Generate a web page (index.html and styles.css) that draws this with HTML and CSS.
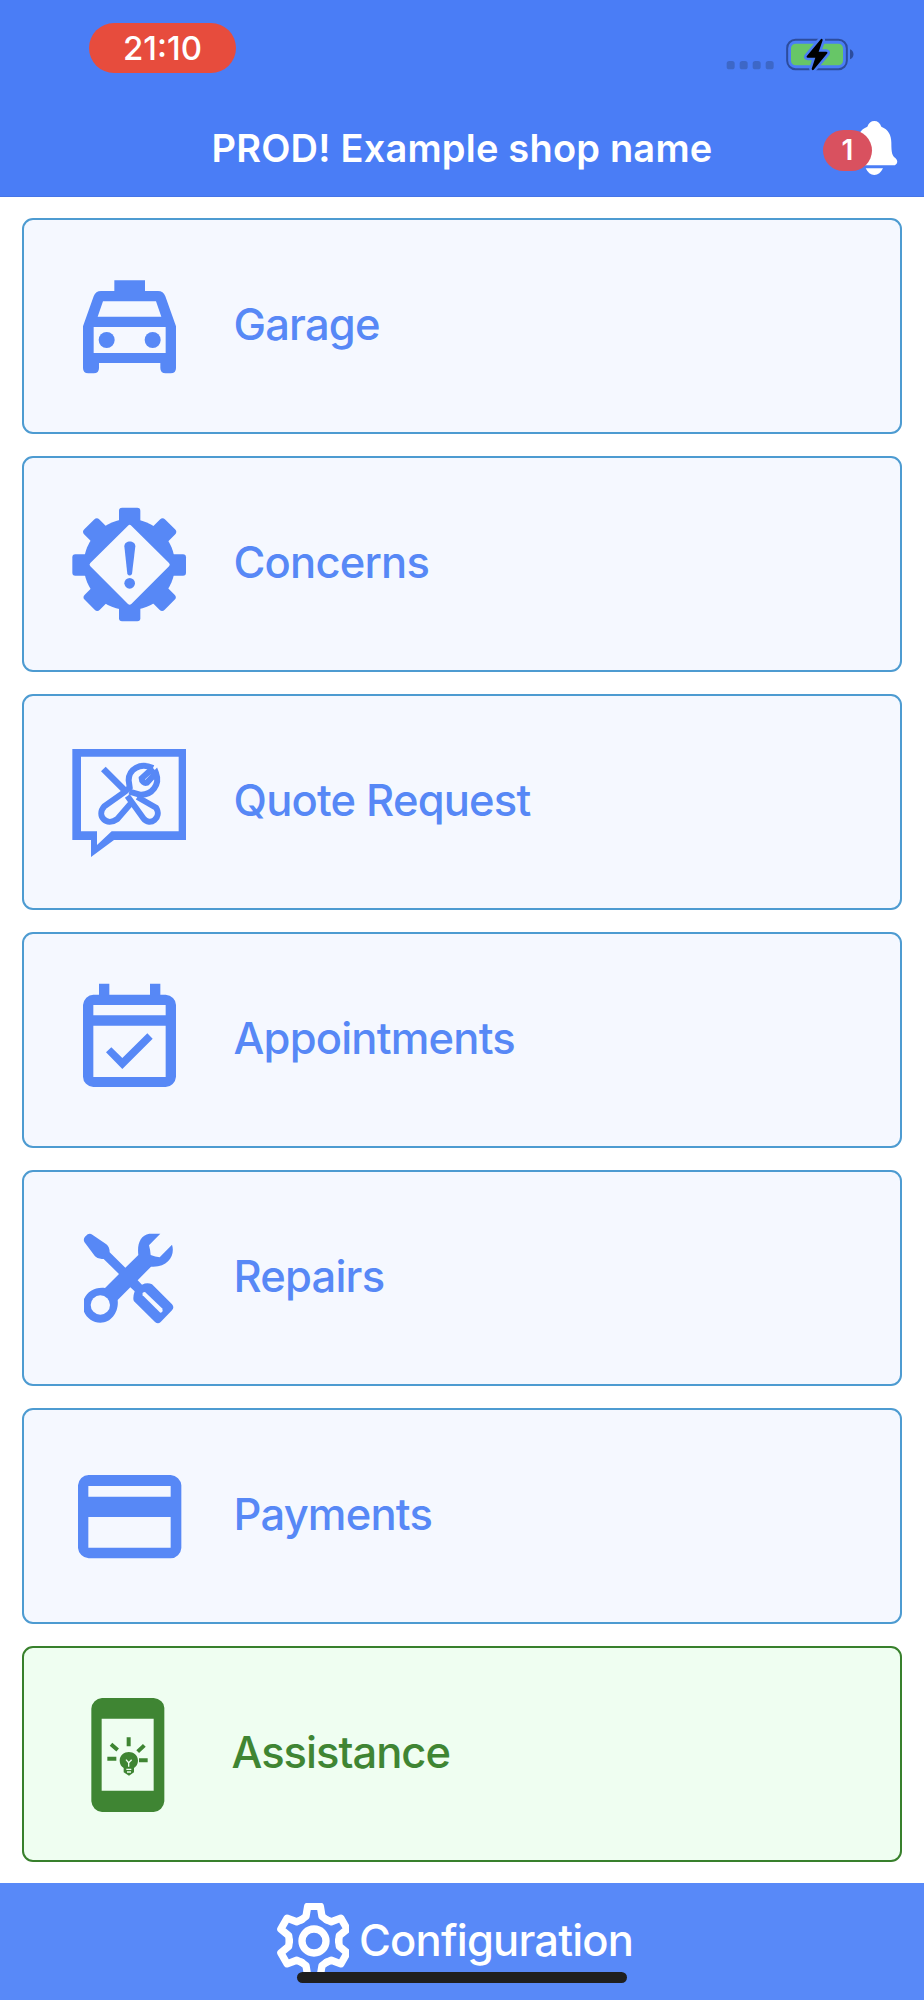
FILE: index.html
```html
<!DOCTYPE html>
<html lang="en">
<head>
  <meta charset="UTF-8">
  <meta name="viewport" content="width=device-width, initial-scale=1.0">
  <title>Example shop name</title>
  <link rel="stylesheet" href="styles.css">
</head>
<body>

<div class="app">
  <header class="header">
    <div class="status-bar">
      <div class="time">21:10</div>
      <svg class="status-icons" viewBox="120 96 420 132">
        <g fill="#3d67c7">
          <rect x="140" y="183" width="24" height="25" rx="8"/>
          <rect x="179" y="183" width="24" height="25" rx="8"/>
          <rect x="218" y="183" width="24" height="25" rx="8"/>
          <rect x="257" y="183" width="24" height="25" rx="8"/>
        </g>
        <rect x="321.500" y="119.500" width="179" height="88" rx="25" fill="none" stroke="#2c4c9d" stroke-width="6"/>
        <rect x="333" y="131" width="156" height="65" rx="14" fill="#67c667"/>
        <path d="M510 148C524 152 524 174 510 178Z" fill="#2c4c9d"/>
        <path d="M423 117L380 169Q378 173 383 173H406L395 206Q396 213 401 209L442 160Q444 156 439 155H416L428 121Q428 114 423 117Z" fill="#000" stroke="#4a7df6" stroke-width="15" stroke-linejoin="round" paint-order="stroke"/>
      </svg>
    </div>
    <div class="nav-bar">
      <h1 class="title">PROD! Example shop name</h1>
      <div class="notifications">
        <svg class="bell" viewBox="507 354 150 174" fill="#fff">
          <path d="M583 360C593 360 600 366 604 377C625 385 634 402 634 425C634 456 637 464 645 470C658 481 650 493 640 493H526C514 493 508 481 521 470C529 464 532 456 532 425C532 402 541 385 562 377C566 366 573 360 583 360Z"/>
          <path d="M557 502H609C603 515 594 522 583 522C572 522 563 515 557 502Z"/>
        </svg>
        <span class="badge">1</span>
      </div>
    </div>
  </header>

  <main class="menu">
    <a class="card">
      <svg class="icon" viewBox="210 229 360 360">
        <path fill-rule="evenodd" d="M343 272H435V304H474Q490 304 496 320L528 410V535Q528 551 512 551H497Q481 551 481 535V520H297V535Q297 551 281 551H265Q249 551 249 535V410L281 320Q287 304 303 304H343ZM309 335L293 381H484L468 335ZM281 412V490H497V412Z"/>
        <circle cx="320" cy="451" r="24"/>
        <circle cx="458" cy="451" r="24"/>
      </svg>
      <span class="label">Garage</span>
    </a>

    <a class="card">
      <svg class="icon" viewBox="60 43 360 360">
        <circle cx="238" cy="225" r="137"/>
        <g>
          <rect x="207" y="54" width="64" height="341" rx="9"/>
          <rect x="67" y="194" width="341" height="64" rx="9"/>
          <rect x="207" y="54" width="64" height="341" rx="11" transform="rotate(45 239 225.500)"/>
          <rect x="207" y="54" width="64" height="341" rx="11" transform="rotate(-45 239 225.500)"/>
        </g>
        <path class="hole" d="M234 108Q239 103 244 108L357 220Q362 225 357 230L244 343Q239 348 234 343L121 230Q116 225 121 220Z"/>
        <path d="M223 170C223 151 256 151 256 170L246 253Q239 262 232 253Z"/>
        <circle cx="239" cy="281" r="16"/>
      </svg>
      <span class="label">Concerns</span>
    </a>

    <a class="card">
      <svg class="icon" viewBox="60 36 360 360">
        <path fill-rule="evenodd" d="M67 57H408V330H192L123 381V330H67ZM93 80V304H141V345L185 304H386V80Z"/>
        <g class="outline" stroke-width="18">
          <path d="M160 117L226 183" stroke-width="20"/>
          <path d="M309 114C270 96 236 118 236 151L239 172L226 184L163 229C138 257 169 291 202 267L248 214"/>
          <path d="M309 114L275 145C275 154 283 161 291 158L318 129C331 163 306 196 270 194L238 185"/>
          <path d="M232 198L280 265C300 292 337 262 318 233L262 201"/>
        </g>
      </svg>
      <span class="label">Quote Request</span>
    </a>

    <a class="card">
      <svg class="icon" viewBox="60 30 360 360">
        <path fill-rule="evenodd" d="M147 41H178V74H300V41H331V74H347Q360 75 369 84T378 105V320Q377 333 368 342T347 351H130Q117 350 108 341T99 320V105Q100 92 109 83T130 74H147ZM130 105V136H347V105ZM130 167V321H347V167Z"/>
        <path d="M168 247L184 232L217 264L292 190L308 206L217 297Z"/>
      </svg>
      <span class="label">Appointments</span>
    </a>

    <a class="card">
      <svg class="icon" viewBox="60 24 360 360">
        <path d="M113 73Q120 69 127 74L169 103Q179 111 179 127L226 173L265 135C261 101 271 76 298 71H331L297 106Q301 120 302 135Q316 141 329 142L366 104C376 134 356 174 303 170L263 211L276 224Q292 216 306 223L366 283Q374 292 366 301L332 336Q324 344 315 336L252 274Q247 265 254 244L241 232L203 270C207 303 186 338 151 338C130 338 110 324 102 305V267C113 244 135 231 165 234L207 192L161 147Q144 149 135 139L103 96Q99 87 105 80Z"/>
        <circle class="hole" cx="151" cy="285" r="29"/>
        <path class="hole" d="M278 256Q275 246 285 246L336 295Q342 307 331 308Z"/>
      </svg>
      <span class="label">Repairs</span>
    </a>

    <a class="card">
      <svg class="icon" viewBox="60 17 360 360">
        <path fill-rule="evenodd" d="M116 74H362Q375 75 384 84T394 105V293Q393 306 384 315T362 324H116Q103 323 94 314T84 293V105Q85 92 94 83T116 74ZM115 107V139H362V107ZM115 200V292H362V200Z"/>
      </svg>
      <span class="label">Payments</span>
    </a>

    <a class="card assistance">
      <svg class="icon" viewBox="210 281 360 360">
        <path fill-rule="evenodd" d="M306 293H461Q474 294 484 303T493 325V603Q492 616 483 625T461 635H306Q293 634 284 625T274 603V325Q275 312 284 303T306 293ZM305 355V571H461V355Z"/>
        <g class="outline" stroke-width="12">
          <path d="M386 411V438M333 432L353 449M433 435L413 454M322 475H349M417 480H443"/>
        </g>
        <path d="M359 481C359 446 414 446 414 481C414 491 408 499 402 503V516L387 526L371 516V503C364 499 359 491 359 481Z"/>
        <path class="detail" d="M378 478L386 487L395 478M386 487V499M379 507H394M381 515H393"/>
      </svg>
      <span class="label">Assistance</span>
    </a>
  </main>

  <footer class="footer">
    <svg class="gear" viewBox="102 129 225 225">
      <g fill="none" stroke="#fff" stroke-width="22" stroke-linejoin="round" stroke-linecap="round">
        <circle cx="222" cy="243" r="36"/>
        <g transform="translate(222 243)">
          <path id="tooth" d="M-37 -64L-24 -74L-19 -104H19L24 -74L37 -64"/>
          <use href="#tooth" transform="rotate(60)"/>
          <use href="#tooth" transform="rotate(120)"/>
          <use href="#tooth" transform="rotate(180)"/>
          <use href="#tooth" transform="rotate(240)"/>
          <use href="#tooth" transform="rotate(300)"/>
        </g>
      </g>
    </svg>
    <span class="footer-label">Configuration</span>
    <div class="home-indicator"></div>
  </footer>
</div>

</body>
</html>
```
FILE: styles.css
```css
* {
  box-sizing: border-box;
}
body {
  margin: 0;
  background: #fff;
  font-family: Inter, "Liberation Sans", sans-serif;
}
.app {
  display: flex;
  flex-direction: column;
  height: 2000px;
  overflow: hidden;
}

/* Header */
.header {
  height: 197px;
  background: #4a7df6;
  border-bottom: 1px solid #4675e6;
  color: #fff;
}
.status-bar {
  display: flex;
  justify-content: space-between;
  height: 100px;
  padding: 23px 64px 0 89px;
}
.time {
  width: 147px;
  height: 50px;
  border-radius: 25px;
  background: #e74c3d;
  font-size: 33px;
  font-weight: 500;
  line-height: 51px;
  text-align: center;
}
.status-icons {
  width: 140px;
  height: 44px;
  margin-top: 9px;
}
.nav-bar {
  display: grid;
  grid-template-columns: 101px 1fr 101px;
  align-items: center;
  height: 96px;
}
.title {
  grid-column: 2;
  margin: 0;
  font-size: 38px;
  font-weight: 600;
  text-align: center;
  letter-spacing: 0.2px;
  white-space: nowrap;
}
.notifications {
  position: relative;
  display: flex;
  justify-content: flex-end;
  padding-right: 25px;
}
.bell {
  width: 50px;
  height: 58px;
}
.badge {
  position: absolute;
  top: 11px;
  left: 0;
  width: 49px;
  height: 41px;
  border-radius: 21px;
  background: #d9515f;
  font-size: 28px;
  font-weight: 600;
  line-height: 41px;
  text-align: center;
}

/* Menu cards */
.menu {
  display: flex;
  flex-direction: column;
  gap: 21.9px;
  padding: 21.4px 22px;
}
.card {
  display: flex;
  align-items: center;
  height: 216px;
  padding-left: 46px;
  border: 2px solid #4d9bd1;
  border-radius: 11px;
  background: #f5f8ff;
  color: #5788f6;
}
.icon {
  width: 120px;
  height: 120px;
  fill: currentColor;
}
.icon .hole {
  fill: #f5f8ff;
}
.icon .outline {
  fill: none;
  stroke: currentColor;
}
.icon .detail {
  fill: none;
  stroke: #effef1;
  stroke-width: 4;
}
.label {
  padding: 0 0 4px 43.5px;
  font-size: 43.5px;
  font-weight: 500;
  letter-spacing: -0.8px;
}
.assistance {
  border-color: #38802c;
  background: #effef1;
  color: #3f8533;
}
.assistance .label {
  padding-left: 41.5px;
  letter-spacing: -1px;
}

/* Footer */
.footer {
  position: relative;
  display: flex;
  gap: 10px;
  height: 117px;
  margin-top: auto;
  padding: 20px 0 0 274px;
  background: #5889f8;
  color: #fff;
}
.gear {
  width: 75px;
  height: 75px;
}
.footer-label {
  font-size: 43.5px;
  font-weight: 500;
  line-height: 74px;
  letter-spacing: -0.8px;
}
.home-indicator {
  position: absolute;
  left: 297px;
  bottom: 17px;
  width: 330px;
  height: 11px;
  border-radius: 6px;
  background: #1f1f1f;
}
```
